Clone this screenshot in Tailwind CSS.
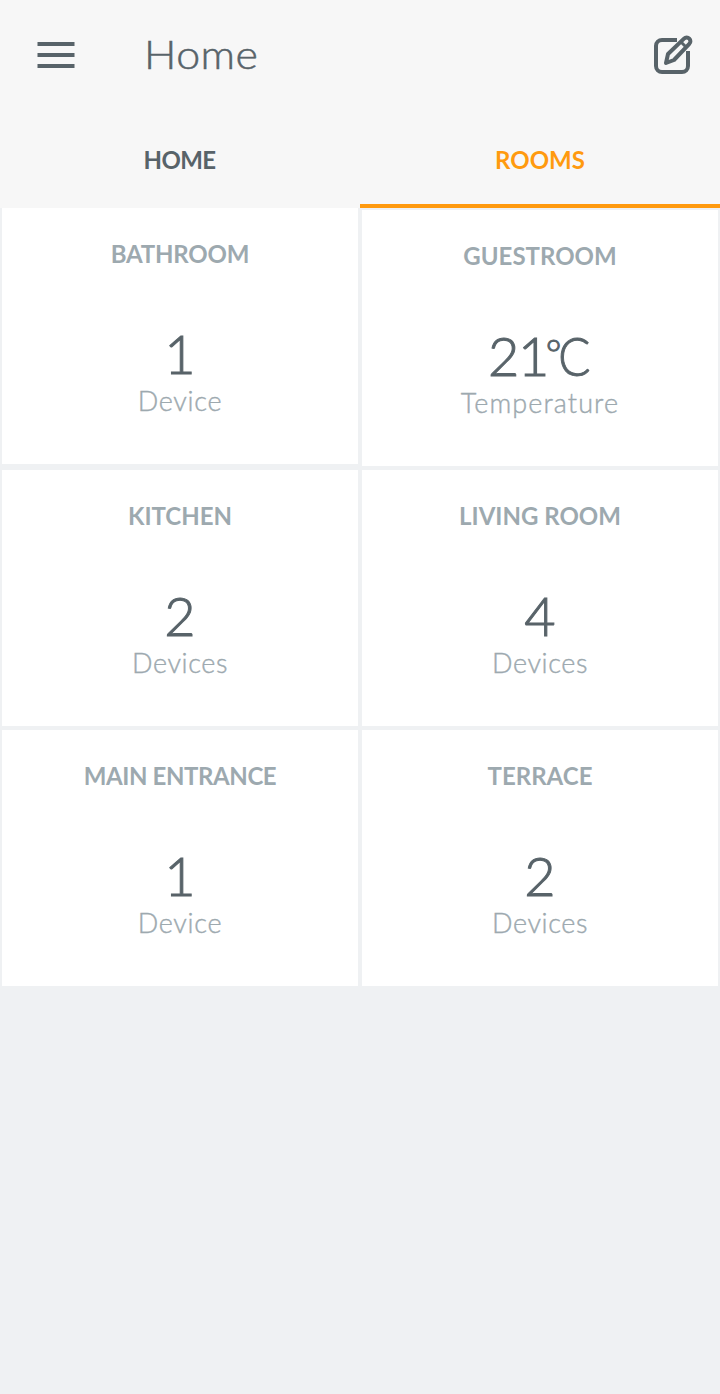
<!DOCTYPE html>
<html lang="en">
<head>
    <meta charset="UTF-8">
    <meta name="viewport" content="width=device-width, initial-scale=1.0">
    <title>Home</title>
    <script src="https://cdn.jsdelivr.net/npm/@tailwindcss/browser@4"></script>
</head>
<body class="bg-[#eff1f3] min-h-screen font-['Lato',sans-serif] text-[#586369]">

    <!-- Header -->
    <header class="bg-[#f7f7f7] h-[208px] flex flex-col">
        <div class="h-[110px] flex items-center pl-[37px] pr-[26px]">
            <button aria-label="Menu">
                <svg class="block" width="38" height="28" viewBox="0 0 38 28" fill="currentColor">
                    <path d="M.5 1h37v4H.5zM.5 12h37v4H.5zM.5 23h37v4H.5z"/>
                </svg>
            </button>
            <h1 class="ml-[69px] pb-0.5 text-[39px] leading-[48px] font-light tracking-[0.4px] origin-left scale-x-110 [-webkit-text-stroke:0.5px]">Home</h1>
            <button class="ml-auto" aria-label="Edit">
                <svg class="block" width="42" height="42" viewBox="0 0 42 42" fill="none" stroke="currentColor" stroke-width="4" stroke-linejoin="round">
                    <path d="M25 6H10a6 6 0 0 0-6 6v20a6 6 0 0 0 6 6h20a6 6 0 0 0 6-6V17"/>
                    <path d="M14 29l2-9L32 4.600a3.700 3.700 0 0 1 5.300 5.300L22 26z"/>
                    <path d="M29 8l5 5" stroke-width="3"/>
                </svg>
            </button>
        </div>
        <nav class="grid grid-cols-2 flex-1 text-2xl font-bold text-center">
            <a href="#" class="pt-[34px] pr-px tracking-[-0.6px]">HOME</a>
            <a href="#" class="pt-[34px] text-[#ff9a0f] border-b-4 border-[#ff9a0f]">ROOMS</a>
        </nav>
    </header>

    <!-- Rooms -->
    <main class="grid grid-cols-2 gap-1 px-0.5 text-center">
        <div class="flex flex-col">
            <section class="h-64 bg-white mb-1.5 pt-[30px]">
                <h2 class="text-2xl font-bold tracking-[-0.2px] text-[#9da9af]">BATHROOM</h2>
                <p class="mt-[52px] text-[54px] leading-[64px] font-light [-webkit-text-stroke:1px]">1</p>
                <p class="-mt-px text-[27px] leading-8 font-light tracking-[0.7px] [-webkit-text-stroke:0.4px] text-[#9da9af]">Device</p>
            </section>
            <section class="h-64 bg-white mb-1 pt-[30px]">
                <h2 class="text-2xl font-bold text-[#9da9af]">KITCHEN</h2>
                <p class="mt-[52px] text-[54px] leading-[64px] font-light [-webkit-text-stroke:1px]">2</p>
                <p class="-mt-px text-[27px] leading-8 font-light tracking-[0.6px] [-webkit-text-stroke:0.4px] text-[#9da9af]">Devices</p>
            </section>
            <section class="h-64 bg-white pt-[30px]">
                <h2 class="text-2xl font-bold tracking-[-0.4px] text-[#9da9af]">MAIN ENTRANCE</h2>
                <p class="mt-[52px] text-[54px] leading-[64px] font-light [-webkit-text-stroke:1px]">1</p>
                <p class="-mt-px text-[27px] leading-8 font-light tracking-[0.7px] [-webkit-text-stroke:0.4px] text-[#9da9af]">Device</p>
            </section>
        </div>
        <div class="flex flex-col pt-0.5">
            <section class="h-64 bg-white mb-1 pt-[30px]">
                <h2 class="text-2xl font-bold text-[#9da9af]">GUESTROOM</h2>
                <p class="mt-[52px] h-16 pr-[3px] flex justify-center text-[54px] leading-[64px] font-light [-webkit-text-stroke:1px]">
                    <span class="tracking-[-1.5px]">21</span>
                    <span class="-ml-[2px] text-[38px] leading-[57px]">°</span>
                    <span class="-ml-[5px] -mr-1 inline-block scale-x-88">C</span>
                </p>
                <p class="-mt-px text-[27px] leading-8 font-light tracking-[1.1px] [-webkit-text-stroke:0.4px] text-[#9da9af]">Temperature</p>
            </section>
            <section class="h-64 bg-white mb-1 pt-[30px]">
                <h2 class="text-2xl font-bold text-[#9da9af]">LIVING ROOM</h2>
                <p class="mt-[52px] text-[54px] leading-[64px] font-light [-webkit-text-stroke:1px]">4</p>
                <p class="-mt-px text-[27px] leading-8 font-light tracking-[0.6px] [-webkit-text-stroke:0.4px] text-[#9da9af]">Devices</p>
            </section>
            <section class="h-64 bg-white pt-[30px]">
                <h2 class="text-2xl font-bold text-[#9da9af]">TERRACE</h2>
                <p class="mt-[52px] text-[54px] leading-[64px] font-light [-webkit-text-stroke:1px]">2</p>
                <p class="-mt-px text-[27px] leading-8 font-light tracking-[0.6px] [-webkit-text-stroke:0.4px] text-[#9da9af]">Devices</p>
            </section>
        </div>
    </main>

</body>
</html>
